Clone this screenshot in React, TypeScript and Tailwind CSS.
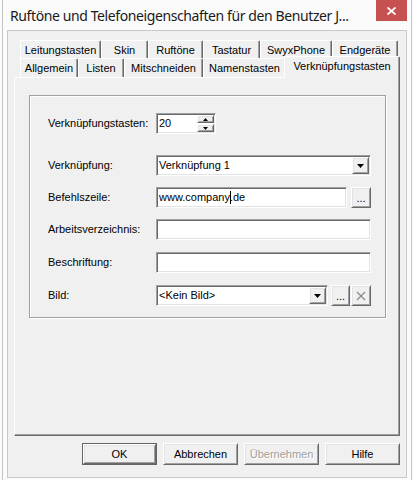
import React from "react";

const raised =
  "border border-t-white border-l-white border-r-[#696969] border-b-[#696969] shadow-[inset_1px_1px_0_#e3e3e3,inset_-1px_-1px_0_#a0a0a0] bg-[#f0f0f0]";
const sunken =
  "border border-t-[#a0a0a0] border-l-[#a0a0a0] border-r-white border-b-white shadow-[inset_1px_1px_0_#696969,inset_-1px_-1px_0_#e3e3e3] bg-white";

function DownArrow() {
  return (
    <svg width="7" height="4" viewBox="0 0 7 4">
      <polygon points="0,0 7,0 3.5,4" fill="#000" />
    </svg>
  );
}

function Label({ children }: { children: React.ReactNode }) {
  return <div className="w-[108px] shrink-0">{children}</div>;
}

function Combo({ value, width }: { value: string; width: string }) {
  return (
    <div className={`${sunken} ${width} h-[21px] p-[1px] flex items-stretch`}>
      <div className="flex-1 flex items-center pl-[1px] leading-none">{value}</div>
      <div className={`${raised} w-[17px] flex items-center justify-center`}>
        <DownArrow />
      </div>
    </div>
  );
}

function Edit({ width, children }: { width: string; children?: React.ReactNode }) {
  return (
    <div className={`${sunken} ${width} h-[21px] px-[2px] flex items-center leading-none`}>
      {children}
    </div>
  );
}

function DotsButton({ width }: { width: string }) {
  return (
    <div className={`${raised} ${width} h-[21px] flex items-end justify-center pb-[3px] leading-none`}>
      ...
    </div>
  );
}

function ClearButton() {
  return (
    <div className={`${raised} w-[20px] h-[21px] flex items-center justify-center`}>
      <svg width="10" height="10" viewBox="0 0 10 10">
        <line x1="1" y1="1" x2="9" y2="9" stroke="#8c8c8c" strokeWidth="1.3" />
        <line x1="9" y1="1" x2="1" y2="9" stroke="#8c8c8c" strokeWidth="1.3" />
      </svg>
    </div>
  );
}

function Tab({ label, width }: { label: string; width: number }) {
  return (
    <div
      className="h-full shrink-0 border-l border-t border-r border-l-white border-t-white border-r-[#696969] rounded-t-[2px] shadow-[inset_-1px_0_0_#a0a0a0] flex items-center justify-center leading-none pt-[1px]"
      style={{ width }}
    >
      {label}
    </div>
  );
}

function DialogButton({
  children,
  isDefault,
  disabled,
}: {
  children: React.ReactNode;
  isDefault?: boolean;
  disabled?: boolean;
}) {
  const face = (
    <div
      className={`${raised} h-full w-full flex items-center justify-center leading-none ${
        disabled ? "text-[#a0a0a0] [text-shadow:1px_1px_0_#fff]" : ""
      }`}
    >
      {children}
    </div>
  );
  return (
    <div
      className={`w-[75px] h-[22px] ${isDefault ? "border border-[#646464]" : ""}`}
    >
      {face}
    </div>
  );
}

const backRow: [string, number][] = [
  ["Leitungstasten", 81],
  ["Skin", 47],
  ["Ruftöne", 55],
  ["Tastatur", 57],
  ["SwyxPhone", 72],
  ["Endgeräte", 66],
];

const frontRow: [string, number][] = [
  ["Allgemein", 58],
  ["Listen", 46],
  ["Mitschneiden", 79],
  ["Namenstasten", 83],
];

export default function App() {
  return (
    <div className="w-[414px] h-[480px] overflow-hidden bg-[#fbfbfb] px-[2px] font-['Liberation_Sans',Arial,sans-serif] text-[11px] text-black">
      <div className="h-full flex flex-col border-x border-[#c4c4c4]">
        {/* caption bar */}
        <div className="h-[30px] shrink-0 flex items-start">
          <div className="flex-1 min-w-0 pl-[7px] pt-[6px] font-['Noto_Sans',sans-serif] text-[14px] tracking-[-0.4px] leading-[20px] text-[#1a1a1a] whitespace-nowrap">
            Ruftöne und Telefoneigenschaften für den Benutzer J...
          </div>
          <div className="w-[31px] h-[21px] shrink-0 mr-[4px] bg-[#c75050] flex items-center justify-center">
            <svg width="9" height="8" viewBox="0 0 9 8">
              <line x1="0.5" y1="0.5" x2="8.5" y2="7.5" stroke="#fff" strokeWidth="1.8" />
              <line x1="8.5" y1="0.5" x2="0.5" y2="7.5" stroke="#fff" strokeWidth="1.8" />
            </svg>
          </div>
        </div>

        {/* client area */}
        <div className="mx-[4px] mb-[2px] flex-1 border border-[#c9c9c9] bg-[#f0f0f0] px-[6px] pt-[9px] flex flex-col">
          {/* tab headers */}
          <div className="h-[37px] shrink-0 flex flex-col">
            <div className="h-[18px] pl-[6px] flex">
              {backRow.map(([l, w]) => (
                <Tab key={l} label={l} width={w} />
              ))}
            </div>
            <div className="h-[19px] pl-[6px] flex items-start">
              {frontRow.map(([l, w]) => (
                <Tab key={l} label={l} width={w} />
              ))}
              <div className="relative z-10 -ml-[2px] -mt-[2px] w-[116px] h-[22px] shrink-0 bg-[#f0f0f0] border-l border-t border-r border-l-white border-t-white border-r-[#696969] rounded-t-[2px] shadow-[inset_-1px_0_0_#a0a0a0] flex items-start justify-center pt-[4px] leading-none">
                Verknüpfungstasten
              </div>
            </div>
          </div>

          {/* tab page */}
          <div className="h-[359px] shrink-0 border border-t-white border-l-white border-r-[#696969] border-b-[#696969] shadow-[inset_-1px_-1px_0_#a0a0a0] pl-[14px] pt-[17px]">
            <div className="w-[357px] h-[223px] border border-[#a0a0a0] shadow-[inset_1px_1px_0_#fff,1px_1px_0_#fff] pl-[18px] pt-[17px] flex flex-col">
              <div className="h-[21px] flex items-center">
                <Label>Verknüpfungstasten:</Label>
                <div className={`${sunken} w-[60px] h-[21px] p-[1px] flex`}>
                  <div className="flex-1 flex items-center pl-[1px] leading-none">20</div>
                  <div className="w-[17px] flex flex-col gap-[1px]">
                    <div className={`${raised} flex-1 flex items-center justify-center`}>
                      <svg width="5" height="3" viewBox="0 0 5 3">
                        <polygon points="0,3 5,3 2.5,0" fill="#000" />
                      </svg>
                    </div>
                    <div className={`${raised} flex-1 flex items-center justify-center`}>
                      <svg width="5" height="3" viewBox="0 0 5 3">
                        <polygon points="0,0 5,0 2.5,3" fill="#000" />
                      </svg>
                    </div>
                  </div>
                </div>
              </div>

              <div className="mt-[21px] h-[21px] flex items-center">
                <Label>Verknüpfung:</Label>
                <Combo value="Verknüpfung 1" width="w-[215px]" />
              </div>

              <div className="mt-[11px] h-[21px] flex items-center">
                <Label>Befehlszeile:</Label>
                <Edit width="w-[191px]">
                  <span>www.company</span>
                  <span className="inline-block w-[1px] h-[13px] bg-black -mr-[1px]" />
                  <span>.de</span>
                </Edit>
                <div className="ml-[4px]">
                  <DotsButton width="w-[20px]" />
                </div>
              </div>

              <div className="mt-[11px] h-[21px] flex items-center">
                <Label>Arbeitsverzeichnis:</Label>
                <Edit width="w-[215px]" />
              </div>

              <div className="mt-[12px] h-[21px] flex items-center">
                <Label>Beschriftung:</Label>
                <Edit width="w-[215px]" />
              </div>

              <div className="mt-[12px] h-[21px] flex items-center">
                <Label>Bild:</Label>
                <Combo value="<Kein Bild>" width="w-[172px]" />
                <div className="ml-[3px]">
                  <DotsButton width="w-[19px]" />
                </div>
                <div className="ml-[1px]">
                  <ClearButton />
                </div>
              </div>
            </div>
          </div>

          {/* dialog buttons */}
          <div className="mt-[7px] h-[22px] flex justify-end gap-[6px]">
            <DialogButton isDefault>OK</DialogButton>
            <DialogButton>Abbrechen</DialogButton>
            <DialogButton disabled>Übernehmen</DialogButton>
            <DialogButton>Hilfe</DialogButton>
          </div>
        </div>
      </div>
    </div>
  );
}
